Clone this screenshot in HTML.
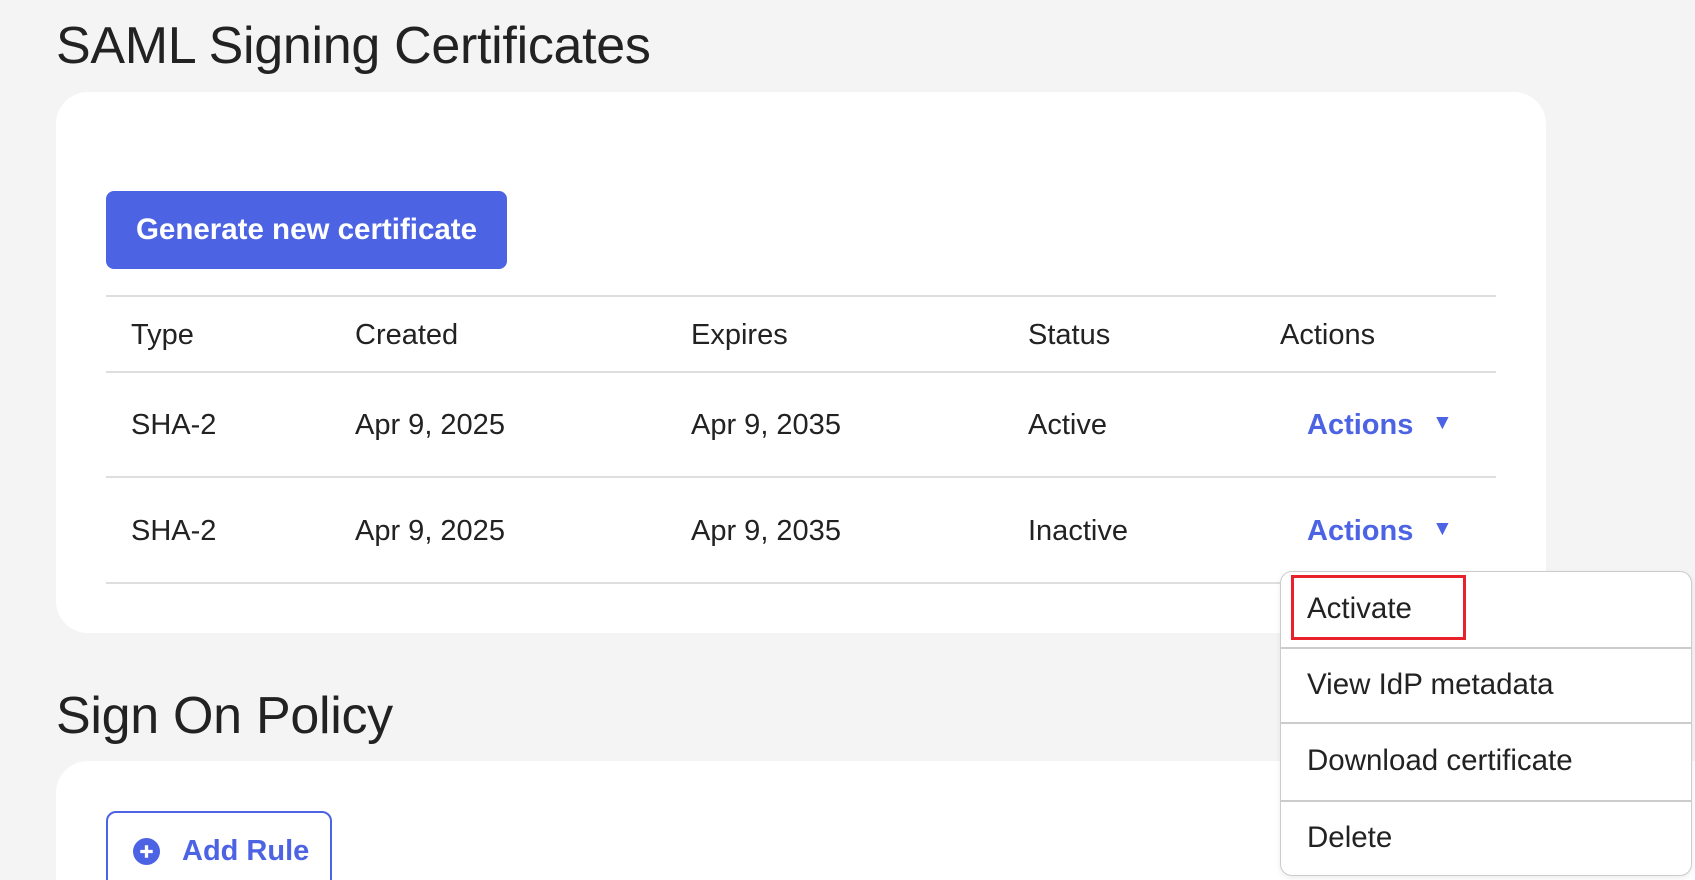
<!DOCTYPE html>
<html style="overflow:hidden;height:880px"><head><style>
html,body{overflow:hidden}
body{margin:0;width:1695px;height:880px;background:#f4f4f4;font-family:"Liberation Sans",sans-serif;color:#222;position:relative}
.abs{position:absolute}
h1{position:absolute;margin:0;font-weight:400;font-size:52px;left:56px;letter-spacing:-0.3px}
.card{position:absolute;background:#fff;border-radius:32px}
.btn{position:absolute;left:106px;top:191px;width:401px;height:78px;background:#4c63e4;border-radius:8px;color:#fff;font-weight:700;font-size:29.5px;line-height:78px;text-align:center}
.line{position:absolute;left:106px;width:1390px;height:2px;background:#dedede}
.t{position:absolute;font-size:29px;line-height:32px}
.act{color:#4c63e4;font-weight:700}
.arr{position:absolute;color:#4c63e4;font-size:21px}
.dd{position:absolute;left:1280px;top:571px;width:410px;height:303px;background:#fff;border:1.5px solid #ccc;border-radius:12px;box-shadow:0 2px 6px rgba(0,0,0,.08)}
.sep{position:absolute;left:0;right:0;height:2px;background:#ccc}
.it{position:absolute;left:26px;font-size:29.5px}
</style></head><body>
<h1 style="top:16px">SAML Signing Certificates</h1>
<div class="card" style="left:56px;top:92px;width:1490px;height:541px"></div>
<div class="btn">Generate new certificate</div>
<div class="line" style="top:295px"></div>
<div class="line" style="top:371px"></div>
<div class="line" style="top:476px"></div>
<div class="line" style="top:582px"></div>
<div class="t" style="left:131px;top:319px">Type</div>
<div class="t" style="left:355px;top:319px">Created</div>
<div class="t" style="left:691px;top:319px">Expires</div>
<div class="t" style="left:1028px;top:319px">Status</div>
<div class="t" style="left:1280px;top:319px">Actions</div>
<div class="t" style="left:131px;top:409px">SHA-2</div>
<div class="t" style="left:355px;top:409px">Apr 9, 2025</div>
<div class="t" style="left:691px;top:409px">Apr 9, 2035</div>
<div class="t" style="left:1028px;top:409px">Active</div>
<div class="t act" style="left:1307px;top:409px">Actions</div>
<div class="arr" style="left:1432px;top:411px">▼</div>
<div class="t" style="left:131px;top:515px">SHA-2</div>
<div class="t" style="left:355px;top:515px">Apr 9, 2025</div>
<div class="t" style="left:691px;top:515px">Apr 9, 2035</div>
<div class="t" style="left:1028px;top:515px">Inactive</div>
<div class="t act" style="left:1307px;top:515px">Actions</div>
<div class="arr" style="left:1432px;top:517px">▼</div>
<h1 style="top:686px">Sign On Policy</h1>
<div class="abs" style="left:0;top:761px;width:1695px;height:119px;overflow:hidden">
<div class="card" style="left:56px;top:0;width:1700px;height:200px"></div>
<div class="abs" style="left:106px;top:50px;width:226px;height:110px;border:2px solid #4c63e4;border-radius:10px;box-sizing:border-box"></div>
<svg class="abs" style="left:133px;top:77px" width="27" height="27" viewBox="0 0 26 26"><circle cx="13" cy="13" r="13" fill="#4c63e4"/><path d="M13 7v12M7 13h12" stroke="#fff" stroke-width="3.2"/></svg>
<div class="t act" style="left:182px;top:74px">Add Rule</div>
</div>
<div class="dd">
<div class="sep" style="top:75px"></div>
<div class="sep" style="top:150px"></div>
<div class="sep" style="top:228px"></div>
<div class="it" style="top:20px">Activate</div>
<div class="it" style="top:96px">View IdP metadata</div>
<div class="it" style="top:172px">Download certificate</div>
<div class="it" style="top:249px">Delete</div>
</div>
<div class="abs" style="left:1291px;top:575px;width:175px;height:65px;border:3px solid #e8212b;box-sizing:border-box"></div>
</body></html>
